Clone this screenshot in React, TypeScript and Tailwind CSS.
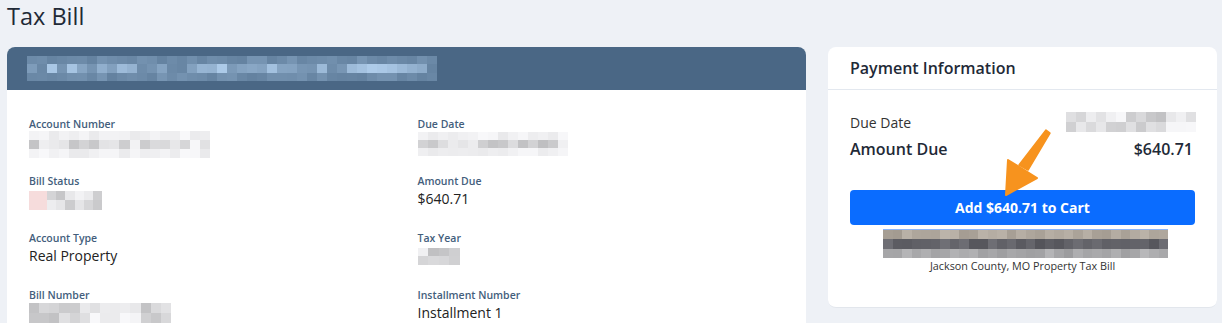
import React from "react";

function rand(seed: number) {
  let s = seed;
  return () => {
    s = (s * 9301 + 49297) % 233280;
    return s / 233280;
  };
}

function Mosaic({
  w,
  h,
  cols,
  rows,
  seed,
  base,
  range,
  edge = true,
  rowBases,
}: {
  w: number;
  h: number;
  cols: number;
  rows: number;
  seed: number;
  base: [number, number, number];
  range: number;
  edge?: boolean;
  rowBases?: [number, number, number][];
}) {
  const r = rand(seed);
  const cells: string[] = [];
  for (let y = 0; y < rows; y++) {
    for (let x = 0; x < cols; x++) {
      const mid = y > 0 && y < rows - 1;
      const k = edge ? (mid ? r() * range : r() * range * 0.25) : r() * range;
      const b = rowBases ? rowBases[y] : base;
      const c = b.map((v) => Math.max(0, Math.min(255, Math.round(v - k)))) as number[];
      cells.push(`rgb(${c[0]},${c[1]},${c[2]})`);
    }
  }
  return (
    <div
      className="grid"
      style={{
        width: w,
        height: h,
        gridTemplateColumns: `repeat(${cols}, 1fr)`,
        gridTemplateRows: `repeat(${rows}, 1fr)`,
      }}
    >
      {cells.map((c, i) => (
        <div key={i} style={{ backgroundColor: c }} />
      ))}
    </div>
  );
}

function Field({ label, children }: { label: string; children: React.ReactNode }) {
  return (
    <div className="flex flex-col">
      <div className="text-[10.5px] leading-[14px] font-semibold text-[#435e7c]">{label}</div>
      <div className="h-[20px] flex items-center text-[14px] text-[#222]">{children}</div>
    </div>
  );
}

export default function App() {
  const gray: [number, number, number] = [248, 248, 250];
  return (
    <div
      className="w-[1222px] h-[323px] bg-[#eef1f6] overflow-hidden relative"
      style={{ fontFamily: '"Open Sans", "Noto Sans", sans-serif' }}
    >
      <div className="px-[7px] pt-[1px] h-[47px] text-[23.5px] leading-[30px] text-[#1f2a37]">Tax Bill</div>
      <div className="flex gap-[22px] pl-[7px] pr-[5px]">
        <div className="w-[799px] h-[290px] bg-white rounded-t-[8px] overflow-hidden">
          <div className="h-[43px] bg-[#4a6785] flex items-center pl-[20px]">
            <Mosaic w={410} h={25} cols={41} rows={3} seed={7} base={[100, 130, 160]} range={-75} />
          </div>
          <div className="grid grid-cols-2 pl-[22px] pt-[27px]">
            <div className="flex flex-col gap-y-[23px]">
              <Field label="Account Number">
                <div className="mt-[6px]">
                  <Mosaic w={181} h={27} cols={18} rows={3} seed={3} base={gray} range={60} />
                </div>
              </Field>
              <Field label="Bill Status">
                <div className="flex mt-[4px]">
                  <div className="w-[18px] h-[19px] bg-[#f6dcdc]" />
                  <Mosaic w={55} h={19} cols={6} rows={2} seed={11} base={gray} range={55} edge={false} />
                </div>
              </Field>
              <Field label="Account Type">Real Property</Field>
              <Field label="Bill Number">
                <div className="mt-[2px]">
                  <Mosaic w={142} h={20} cols={14} rows={2} seed={19} base={gray} range={55} edge={false} />
                </div>
              </Field>
            </div>
            <div className="flex flex-col gap-y-[23px]">
              <Field label="Due Date">
                <div className="mt-[6px]">
                  <Mosaic w={150} h={24} cols={15} rows={3} seed={5} base={gray} range={60} />
                </div>
              </Field>
              <Field label="Amount Due">$640.71</Field>
              <Field label="Tax Year">
                <div className="mt-[2px]">
                  <Mosaic w={42} h={17} cols={4} rows={2} seed={23} base={gray} range={60} edge={false} />
                </div>
              </Field>
              <Field label="Installment Number">Installment 1</Field>
            </div>
          </div>
        </div>
        <div className="w-[389px] h-[261px] bg-white rounded-[8px] flex flex-col border-b border-[#e2e6ec]">
          <div className="h-[43px] flex items-center px-[22px] border-b border-[#e3e8ef] text-[16px] font-semibold text-[#1f2a37]">
            Payment Information
          </div>
          <div className="flex flex-col px-[22px] pt-[21px]">
            <div className="flex justify-between items-center h-[22px]">
              <span className="text-[14px] text-[#333]">Due Date</span>
              <div className="mr-[-1px]">
                <Mosaic w={130} h={20} cols={13} rows={2} seed={31} base={gray} range={55} edge={false} />
              </div>
            </div>
            <div className="flex justify-between items-center h-[26px] mt-[3px] text-[16px] font-semibold text-[#1f2a37]">
              <span>Amount Due</span>
              <span className="mr-[2px]">$640.71</span>
            </div>
            <button className="mt-[28px] h-[35px] w-[345px] rounded-[4px] bg-[#0a6cff] text-white text-[14px] font-bold">
              Add $640.71 to Cart
            </button>
            <div className="flex flex-col items-center mt-[4px]">
              <div className="w-[285px] ml-[6px] border-t border-[#8ab4f8]">
                <Mosaic
                  w={285}
                  h={28}
                  cols={30}
                  rows={3}
                  seed={41}
                  base={gray}
                  range={28}
                  edge={false}
                  rowBases={[
                    [190, 182, 172],
                    [112, 112, 118],
                    [184, 184, 186],
                  ]}
                />
              </div>
              <div className="text-[10.8px] leading-[14px] text-[#333] mt-[1px]">Jackson County, MO Property Tax Bill</div>
            </div>
          </div>
        </div>
      </div>
      <svg className="absolute left-0 top-0 pointer-events-none" width="1222" height="323">
        <polygon points="1046,130 1050,133 1028,170 1019,165" fill="#f7931e" strokeLinejoin="round" stroke="#f7931e" strokeWidth="1.5" />
        <polygon points="1006,195 1008,160 1037,178" fill="#f7931e" strokeLinejoin="round" stroke="#f7931e" strokeWidth="2" />
      </svg>
    </div>
  );
}
